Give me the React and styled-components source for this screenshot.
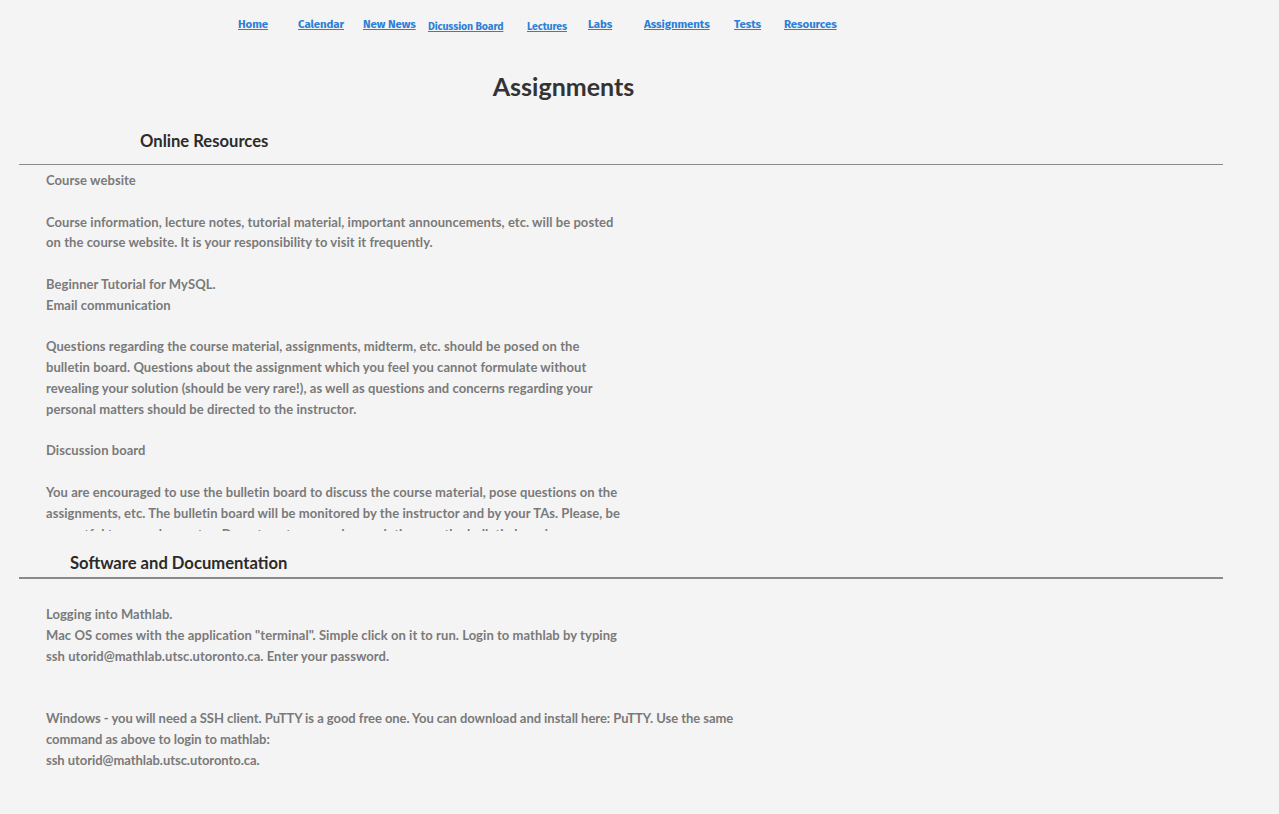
import React from "react";
import styled, { createGlobalStyle } from "styled-components";

const GlobalStyle = createGlobalStyle`
  html, body {
    margin: 0;
    padding: 0;
    background: #f4f4f4;
    font-family: Lato, "Open Sans", sans-serif;
  }
`;

const links = [
  { label: "Home", w: 60 },
  { label: "Calendar", w: 65 },
  { label: "New News", w: 65 },
  { label: "Dicussion Board", w: 99, small: true },
  { label: "Lectures", w: 61, small: true },
  { label: "Labs", w: 56 },
  { label: "Assignments", w: 90 },
  { label: "Tests", w: 50 },
  { label: "Resources", w: 60 },
];

export default function App() {
  return (
    <Page>
      <GlobalStyle />
      <Nav>
        {links.map((l) => (
          <NavItem key={l.label} $w={l.w} $small={l.small}>
            <a href="#">{l.label}</a>
          </NavItem>
        ))}
      </Nav>
      <Title>Assignments</Title>

      <SectionHead $indent={121} $top={27} $h={35}>Online Resources</SectionHead>
      <Rule $thick={1} />
      <ScrollBox>
        <p>
          Course website
          <br />
          <br />
          Course information, lecture notes, tutorial material, important
          announcements, etc. will be posted on the course website. It is your
          responsibility to visit it frequently.
          <br />
          <br />
          Beginner Tutorial for MySQL.
          <br />
          Email communication
          <br />
          <br />
          Questions regarding the course material, assignments, midterm, etc.
          should be posed on the bulletin board. Questions about the assignment
          which you feel you cannot formulate without revealing your solution
          (should be very rare!), as well as questions and concerns regarding
          your personal matters should be directed to the instructor.
          <br />
          <br />
          Discussion board
          <br />
          <br />
          You are encouraged to use the bulletin board to discuss the course
          material, pose questions on the assignments, etc. The bulletin board
          will be monitored by the instructor and by your TAs. Please, be
          respectful to your classmates. Do not post your code or solutions on
          the bulletin board.
        </p>
      </ScrollBox>

      <SectionHead $indent={51} $top={20} $h={26}>Software and Documentation</SectionHead>
      <Rule $thick={2} />
      <Body>
        <p>
          Logging into Mathlab.
          <br />
          Mac OS comes with the application "terminal". Simple click on it to
          run. Login to mathlab by typing
          <br />
          ssh utorid@mathlab.utsc.utoronto.ca. Enter your password.
          <br />
          <br />
          <br />
        </p>
        <Wide>
          Windows - you will need a SSH client. PuTTY is a good free one. You can
          download and install here: PuTTY. Use the same command as above to
          login to mathlab:
          <br />
          ssh utorid@mathlab.utsc.utoronto.ca.
        </Wide>
      </Body>
    </Page>
  );
}

const Page = styled.div`
  width: 1279px;
  min-height: 814px;
  padding: 0 56px 0 19px;
  box-sizing: border-box;
`;

const Nav = styled.ul`
  display: flex;
  align-items: flex-start;
  list-style: none;
  margin: 0;
  padding: 12px 0 0 219px;
  height: 28px;
`;

const NavItem = styled.li`
  width: ${(p) => p.$w}px;
  padding-top: ${(p) => (p.$small ? "2px" : "0")};
  a {
    color: #2d7fd6;
    font-family: "Fira Sans", "Open Sans", sans-serif;
    font-weight: 700;
    font-size: ${(p) => (p.$small ? "10.5px" : "11.5px")};
    letter-spacing: -0.1px;
    text-decoration: underline;
  }
`;

const Title = styled.h1`
  margin: 30px 0 0 0;
  padding-right: 115px;
  text-align: center;
  font-size: 25px;
  font-weight: 700;
  color: #333;
  line-height: 32px;
`;

const SectionHead = styled.h3`
  margin: ${(p) => p.$top}px 0 0 ${(p) => p.$indent}px;
  font-size: 16.6px;
  font-weight: 700;
  color: #2b2b2b;
  line-height: 24px;
  height: ${(p) => p.$h}px;
`;

const Rule = styled.hr`
  margin: 0;
  border: none;
  border-top: ${(p) => p.$thick}px solid #8a8a8a;
`;

const textStyle = `
  font-size: 13px;
  line-height: 20.8px;
  color: #7a7a7a;
  font-weight: 700;
  letter-spacing: 0.06px;
`;

const ScrollBox = styled.div`
  height: 366px;
  overflow: hidden;
  padding: 5px 0 0 27px;
  box-sizing: border-box;
  p {
    margin: 0;
    width: 580px;
    ${textStyle}
  }
`;

const Body = styled.div`
  padding: 25px 0 0 27px;
  p {
    margin: 0;
    width: 580px;
    ${textStyle}
  }
`;

const Wide = styled.p`
  && {
    width: 700px;
    letter-spacing: -0.05px;
  }
`;
